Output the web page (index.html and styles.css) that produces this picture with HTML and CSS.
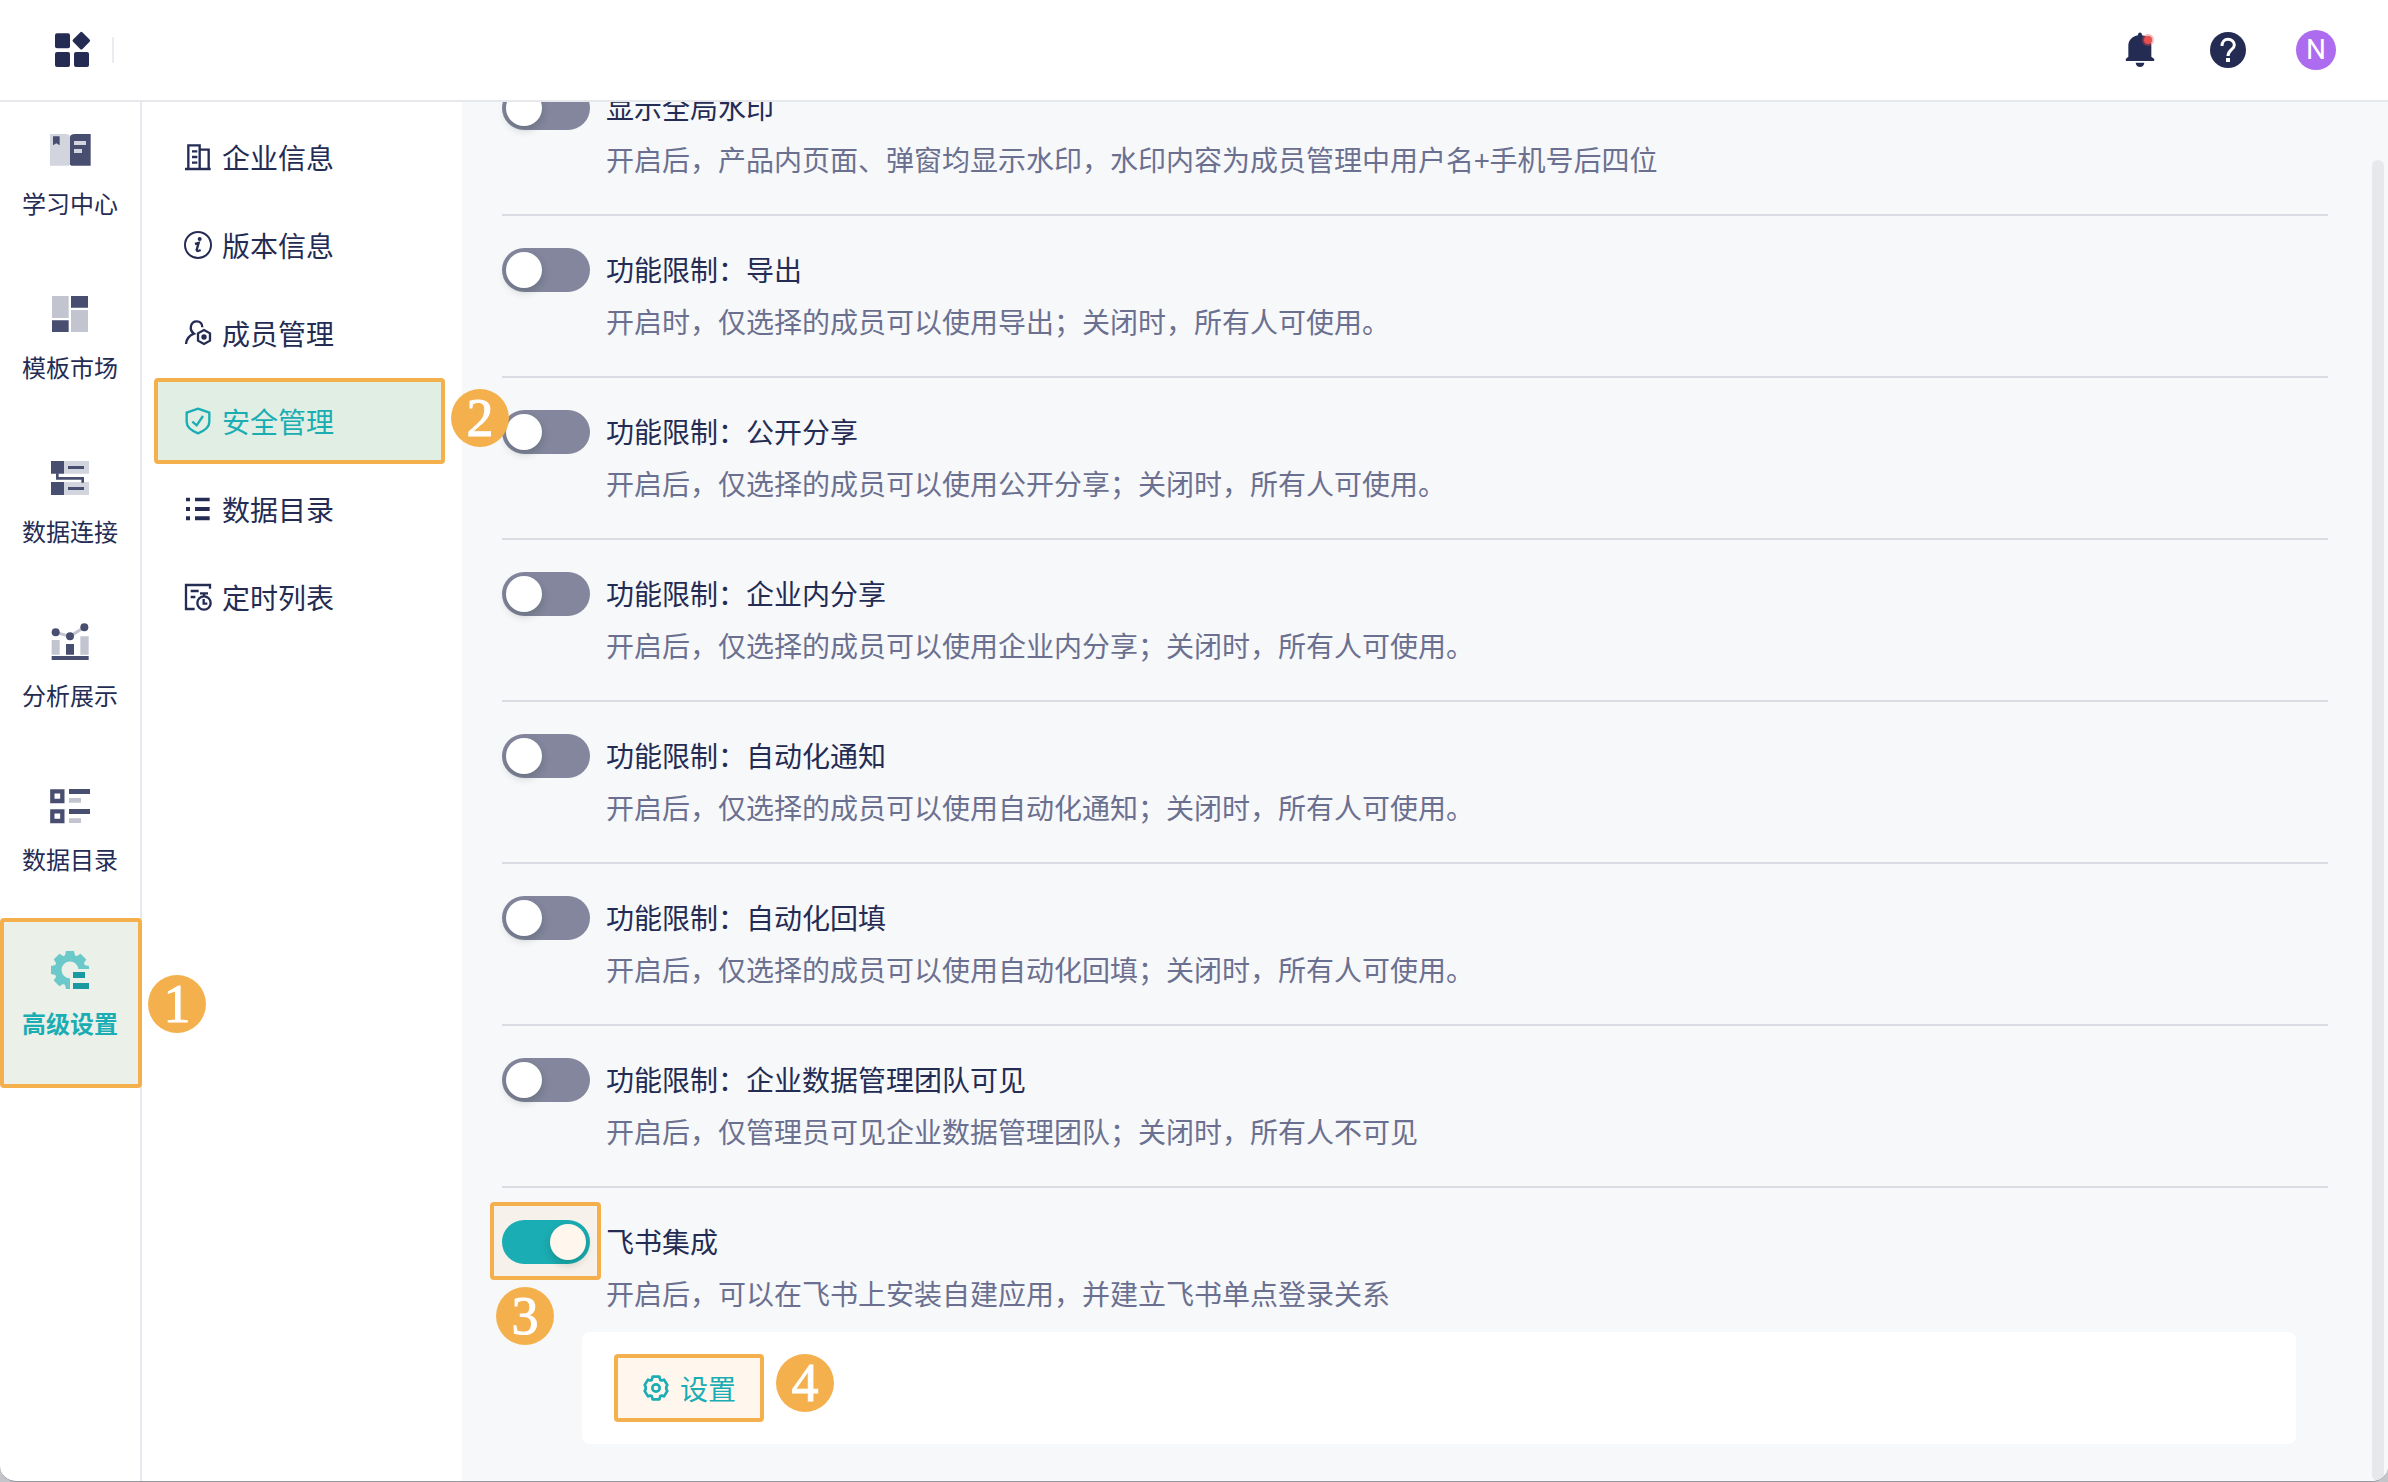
FILE: index.html
```html
<!DOCTYPE html>
<html lang="zh-CN">
<head>
<meta charset="utf-8">
<meta name="viewport" content="width=device-width, initial-scale=1">
<title>安全管理</title>
<link rel="stylesheet" href="styles.css">
</head>
<body>
<div class="app">
  <header class="topbar">
    <a class="logo" href="#" aria-label="首页">
      <svg viewBox="0 0 120 120" fill="currentColor"><rect x="6" y="10" width="45" height="45" rx="6"/><rect x="6" y="66" width="45" height="45" rx="6"/><rect x="63" y="66" width="45" height="45" rx="6"/><rect x="65" y="12" width="40" height="40" rx="5" transform="rotate(45 85 32)"/></svg>
    </a>
    <div class="topbar-actions">
      <button class="icon-button" type="button" aria-label="消息">
        <svg viewBox="0 0 120 120"><g fill="currentColor"><path d="M54 16C53 5 67 5 66 16C83 19 94 31 94 47V80L102 86Q105 93 99 93H21Q15 93 18 86L25 80V47C25 31 37 19 54 16Z"/><path d="M47 98H73Q71 111 60 111Q49 111 47 98Z"/></g><circle cx="84" cy="30" r="18" fill="#e85050" opacity=".4"/><circle cx="84" cy="30" r="12" fill="#e94f4f"/></svg>
      </button>
      <button class="icon-button" type="button" aria-label="帮助">
        <svg viewBox="0 0 120 120"><circle cx="60" cy="60" r="54" fill="currentColor"/><path d="M42 48C42 35 50 28 60 28S79 35 79 45C79 59 60 60 60 78" fill="none" stroke="#fff" stroke-width="9"/><path d="M54 84h12v12h-12z" fill="#fff"/></svg>
      </button>
      <button class="avatar" type="button">N</button>
    </div>
  </header>

  <div class="body">
    <nav class="main-nav" aria-label="主导航">
      <a class="main-link" href="#">
        <svg viewBox="0 0 144 144"><path d="M12 24H62Q72 26 72 32V115L68 119H12Z" fill="#d3d5de"/><path d="M72 32Q74 24 86 24H134V119H76L72 115Z" fill="#484e70"/><path d="M21 31H41V58L31 52L21 58Z" fill="#484e70"/><path d="M84 45h36v12H84zM84 69h24v12H84z" fill="#d3d5de"/></svg>
        <span>学习中心</span>
      </a>
      <a class="main-link" href="#">
        <svg viewBox="0 0 144 144"><path d="M18 18h50v66H18zM75 60h51v66H75z" fill="#c2c4d0"/><path d="M75 18h51v35H75zM18 91h50v35H18z" fill="#484e70"/></svg>
        <span>模板市场</span>
      </a>
      <a class="main-link" href="#">
        <svg viewBox="0 0 144 144"><path d="M53 21h76v38H53zM53 84h76v39H53z" fill="#d3d5de"/><path d="M15 21h39v38H15zM15 84h39v39H15zM66 36h48v9H66zM66 99h48v9H66z" fill="#484e70"/><path d="M34 58V73H110V86" fill="none" stroke="#484e70" stroke-width="8"/></svg>
        <span>数据连接</span>
      </a>
      <a class="main-link" href="#">
        <svg viewBox="0 0 144 144"><path d="M17 66h24v44H17zM103 55h25v55h-25z" fill="#c2c4d0"/><path d="M29 43L72 55L115 28" fill="none" stroke="#c2c4d0" stroke-width="9"/><path d="M17 114h111v12H17zM60 78h24v32H60z" fill="#484e70"/><g fill="#484e70"><circle cx="29" cy="43" r="12"/><circle cx="72" cy="55" r="12"/><circle cx="115" cy="28" r="12"/></g></svg>
        <span>分析展示</span>
      </a>
      <a class="main-link" href="#">
        <svg viewBox="0 0 144 144"><g fill="none" stroke="#484e70" stroke-width="13"><path d="M19 28h30v29H19zM19 88h30v29H19z"/></g><path d="M69 21h63v15H69zM69 81h63v15H69z" fill="#484e70"/><path d="M69 48h36v14H69zM69 109h36v14H69z" fill="#c2c4d0"/></svg>
        <span>数据目录</span>
      </a>
      <a class="main-link main-link-active" href="#" aria-current="true">
        <svg viewBox="0 0 144 144"><clipPath id="gear-cut"><path d="M0 0H144V69H72V144H0Z"/></clipPath><g clip-path="url(#gear-cut)"><circle cx="72" cy="72" r="36" fill="none" stroke="#6bc9c9" stroke-width="21"/><path id="tooth" d="M60 15H84L88 32H56Z" fill="#6bc9c9"/><use href="#tooth" transform="rotate(45 72 72)"/><use href="#tooth" transform="rotate(90 72 72)"/><use href="#tooth" transform="rotate(180 72 72)"/><use href="#tooth" transform="rotate(225 72 72)"/><use href="#tooth" transform="rotate(270 72 72)"/><use href="#tooth" transform="rotate(315 72 72)"/></g><path d="M81 78h36v18H81zM81 111h48v18H81z" fill="#1a9aa0"/></svg>
        <span>高级设置</span>
        <b class="step step-nav">1</b>
      </a>
    </nav>

    <nav class="sub-nav" aria-label="高级设置">
      <a class="sub-link" href="#">
        <svg viewBox="0 0 84 84" fill="none" stroke="currentColor" stroke-width="7"><path d="M3 78H80M13 78V7H47V78M47 20H74V78M24 25H40M24 42H40M24 59H40"/></svg>
        企业信息
      </a>
      <a class="sub-link" href="#">
        <svg viewBox="0 0 84 84" fill="none" stroke="currentColor" stroke-width="6"><circle cx="42" cy="42" r="39"/><circle cx="47" cy="24" r="6" fill="currentColor" stroke="none"/><path d="M33 39L44 36L38 57Q38 63 50 57" stroke-width="7"/></svg>
        版本信息
      </a>
      <a class="sub-link" href="#">
        <svg viewBox="0 0 84 84" fill="none" stroke="currentColor" stroke-width="7"><path d="M6 75C7 60 15 50 30 44C14 33 19 7 38 7C49 7 55 15 55 25"/><path d="M60 33L78 43V65L60 75L42 65V43Z"/><circle cx="60" cy="54" r="8" fill="currentColor" stroke="none"/></svg>
        成员管理
      </a>
      <a class="sub-link sub-link-active" href="#" aria-current="page">
        <svg viewBox="0 0 84 84" fill="none" stroke="currentColor" stroke-width="7"><path d="M42 5L76 17V45C76 61 64 70 42 79C20 70 8 61 8 45V17Z"/><path d="M25 44L38 55L57 27"/></svg>
        安全管理
        <b class="step step-sub">2</b>
      </a>
      <a class="sub-link" href="#">
        <svg viewBox="0 0 84 84" fill="currentColor"><path d="M6 8h12v11H6zM6 36h12v12H6zM6 64h12v12H6zM33 8h44v11H33zM33 36h44v12H33zM33 64h44v12H33z"/></svg>
        数据目录
      </a>
      <a class="sub-link" href="#">
        <svg viewBox="0 0 84 84" fill="none" stroke="currentColor" stroke-width="7"><path d="M32 78H6V6H78V17M20 24H44M20 42H34"/><circle cx="60" cy="60" r="20"/><path d="M48 31H72M60 31V40M59 48V62H70"/></svg>
        定时列表
      </a>
    </nav>

    <main class="content">
      <div class="settings">
        <section class="setting">
          <input class="switch" type="checkbox" role="switch" id="s1">
          <label class="title" for="s1">显示全局水印</label>
          <p class="desc">开启后，产品内页面、弹窗均显示水印，水印内容为成员管理中用户名+手机号后四位</p>
        </section>
        <section class="setting">
          <input class="switch" type="checkbox" role="switch" id="s2">
          <label class="title" for="s2">功能限制：导出</label>
          <p class="desc">开启时，仅选择的成员可以使用导出；关闭时，所有人可使用。</p>
        </section>
        <section class="setting">
          <input class="switch" type="checkbox" role="switch" id="s3">
          <label class="title" for="s3">功能限制：公开分享</label>
          <p class="desc">开启后，仅选择的成员可以使用公开分享；关闭时，所有人可使用。</p>
        </section>
        <section class="setting">
          <input class="switch" type="checkbox" role="switch" id="s4">
          <label class="title" for="s4">功能限制：企业内分享</label>
          <p class="desc">开启后，仅选择的成员可以使用企业内分享；关闭时，所有人可使用。</p>
        </section>
        <section class="setting">
          <input class="switch" type="checkbox" role="switch" id="s5">
          <label class="title" for="s5">功能限制：自动化通知</label>
          <p class="desc">开启后，仅选择的成员可以使用自动化通知；关闭时，所有人可使用。</p>
        </section>
        <section class="setting">
          <input class="switch" type="checkbox" role="switch" id="s6">
          <label class="title" for="s6">功能限制：自动化回填</label>
          <p class="desc">开启后，仅选择的成员可以使用自动化回填；关闭时，所有人可使用。</p>
        </section>
        <section class="setting">
          <input class="switch" type="checkbox" role="switch" id="s7">
          <label class="title" for="s7">功能限制：企业数据管理团队可见</label>
          <p class="desc">开启后，仅管理员可见企业数据管理团队；关闭时，所有人不可见</p>
        </section>
        <section class="setting setting-last">
          <div class="marked-switch">
            <input class="switch" type="checkbox" role="switch" id="s8" checked>
            <b class="step step-switch">3</b>
          </div>
          <label class="title" for="s8">飞书集成</label>
          <p class="desc">开启后，可以在飞书上安装自建应用，并建立飞书单点登录关系</p>
          <div class="card">
            <button class="config" type="button">
              <svg viewBox="0 0 84 84" fill="none" stroke="currentColor" stroke-width="8" stroke-linejoin="round"><path d="M32 8H52L55 18Q60 21 66 17L76 33Q69 42 76 51L66 67Q60 63 55 66L52 76H32L29 66Q24 63 18 67L8 51Q15 42 8 33L18 17Q24 21 29 18Z"/><circle cx="42" cy="42" r="11"/></svg>
              设置
            </button>
            <b class="step">4</b>
          </div>
        </section>
      </div>
      <div class="scrollbar"></div>
    </main>
  </div>
</div>
</body>
</html>
```
FILE: styles.css
```css
:root {
  --ink: #242c54;
  --muted: #6b7090;
  --teal: #1aadb3;
  --mark: #f5b04e;
  --line: #e8e8ee;
}

* { box-sizing: border-box; }

body {
  margin: 0;
  background: #c4c5ca;
  color: var(--ink);
  font-family: "Noto Sans CJK SC", sans-serif;
  font-size: 28px;
  line-height: 42px;
}

a { color: inherit; text-decoration: none; }
button { padding: 0; border: 0; background: none; color: inherit; font: inherit; }
svg { display: block; flex: none; }

.app {
  display: flex;
  flex-direction: column;
  height: 100vh;
  border-bottom: 1px solid #97989e;
  border-radius: 0 0 16px 16px;
  background: #fff;
  overflow: hidden;
}

/* Top bar */
.topbar {
  display: flex;
  flex: none;
  align-items: center;
  justify-content: space-between;
  height: 102px;
  padding: 0 52px 0 53px;
  border-bottom: 2px solid #e7e8ec;
}
.logo { display: flex; align-items: center; gap: 19px; }
.logo svg, .icon-button svg { width: 40px; height: 40px; }
.logo::after { content: ""; width: 2px; height: 26px; background: #ebebf2; }
.topbar-actions { display: flex; gap: 48px; }
.avatar {
  width: 40px;
  height: 40px;
  border-radius: 50%;
  background: #ad6cf0;
  color: #fff;
  font-family: Roboto, sans-serif;
  line-height: 40px;
}

.body { display: flex; flex: 1; min-height: 0; }

/* Primary navigation */
.main-nav {
  flex: none;
  width: 142px;
  border-right: 2px solid var(--line);
}
.main-link {
  position: relative;
  display: flex;
  flex-direction: column;
  align-items: center;
  gap: 8px;
  height: 164px;
  padding-top: 24px;
  font-size: 24px;
}
.main-link svg { width: 48px; height: 48px; }
.main-link-active { z-index: 1; color: var(--teal); font-weight: 700; }
.main-link-active::before {
  content: "";
  position: absolute;
  z-index: -1;
  inset: -4px -2px -2px 0;
  border: 4px solid var(--mark);
  border-radius: 4px;
  background: #ebf0e9;
}

/* Secondary navigation */
.sub-nav { flex: none; width: 320px; padding: 12px 17px 0 12px; }
.sub-link {
  position: relative;
  display: flex;
  align-items: center;
  gap: 10px;
  height: 88px;
  padding: 0 0 2px 30px;
}
.sub-link svg { width: 28px; height: 28px; }
.sub-link-active { z-index: 1; color: var(--teal); }
.sub-link-active::before {
  content: "";
  position: absolute;
  z-index: -1;
  inset: 0 0 2px;
  border: 4px solid var(--mark);
  border-radius: 4px;
  background: #e1eee4;
}

/* Numbered step markers */
.step {
  width: 58px;
  height: 58px;
  border-radius: 50%;
  background: var(--mark);
  color: #fff;
  font: 54px/58px "Liberation Serif", serif;
  -webkit-text-stroke: 1px #fff;
  text-align: center;
}
.step-nav { position: absolute; top: 53px; left: 148px; }
.step-sub { position: absolute; top: 11px; left: 297px; }
.step-switch { position: absolute; top: 67px; left: -6px; }

/* Settings list, scrolled to its end */
.content {
  position: relative;
  display: flex;
  flex: 1;
  flex-direction: column;
  justify-content: flex-end;
  min-width: 0;
  padding: 0 60px 37px 40px;
  background: #f7f8fa;
  overflow: hidden;
}
.setting {
  display: grid;
  grid-template-columns: 88px 1fr;
  gap: 8px 16px;
  padding: 32px 0;
  border-bottom: 2px solid #dadbe3;
}
.setting-last { padding-bottom: 0; border-bottom: 0; }
.desc { grid-column: 2; margin: 0 0 2px; color: var(--muted); }

.switch {
  display: block;
  width: 88px;
  height: 44px;
  margin: 0;
  padding: 4px;
  border-radius: 22px;
  background: #83869d;
  appearance: none;
}
.switch::before {
  content: "";
  display: block;
  width: 36px;
  height: 36px;
  border-radius: 50%;
  background: #fff;
  box-shadow: 0 4px 8px rgba(0, 35, 11, .2);
}
.switch:checked { background: var(--teal); }
.switch:checked::before { margin-left: auto; background: #fff7ee; }

.marked-switch { position: relative; z-index: 0; }
.marked-switch::after {
  content: "";
  position: absolute;
  z-index: -1;
  inset: -18px -11px -16px -12px;
  border: 4px solid var(--mark);
  border-radius: 4px;
  background: #f6f1ea;
}

.card {
  display: flex;
  grid-column: 1 / -1;
  gap: 12px;
  height: 112px;
  margin: 8px 32px 0 80px;
  padding: 22px 32px;
  border-radius: 8px;
  background: #fff;
}
.config {
  display: flex;
  align-items: center;
  gap: 10px;
  height: 68px;
  padding: 0 24px;
  border: 4px solid var(--mark);
  border-radius: 4px;
  background: #fff7ee;
  color: var(--teal);
}
.config svg { width: 28px; height: 28px; }

.scrollbar {
  position: absolute;
  top: 58px;
  right: 4px;
  bottom: 0;
  width: 12px;
  border-radius: 6px;
  background: #e7e8ec;
}
```
